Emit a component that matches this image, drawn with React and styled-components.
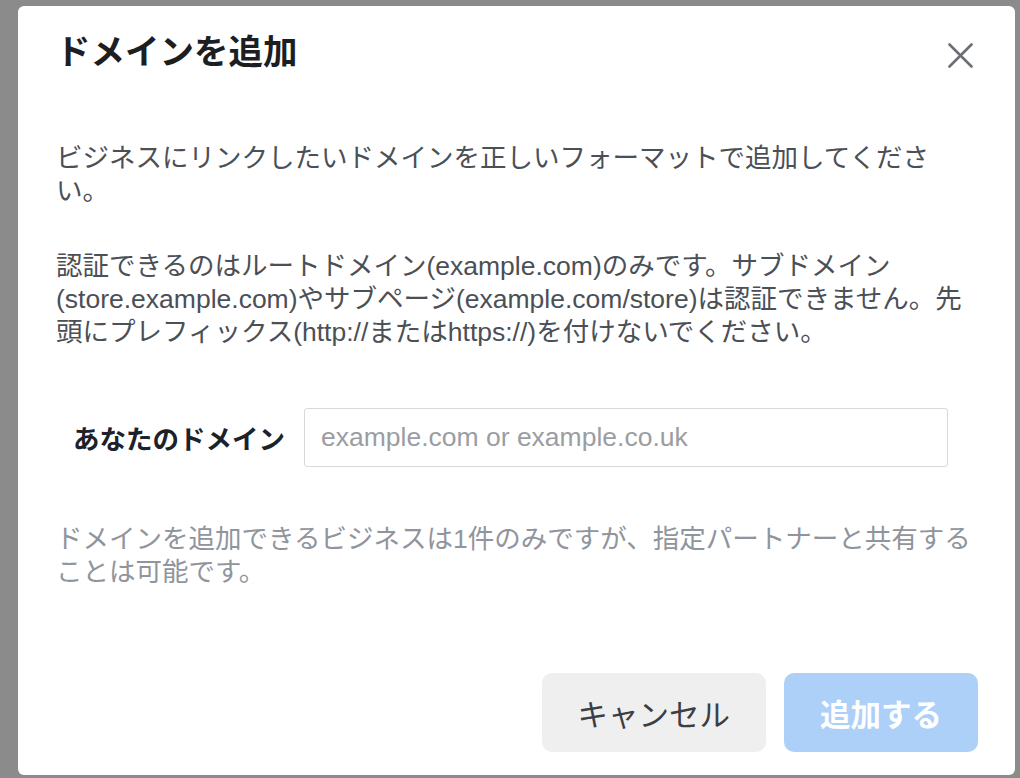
import React from 'react';
import styled, { createGlobalStyle } from 'styled-components';

const GlobalStyle = createGlobalStyle`
  html, body {
    margin: 0;
    padding: 0;
    background: #8b8b8b;
  }
  * {
    box-sizing: border-box;
  }
`;

const FONT = `"Liberation Sans", Arial, "Noto Sans CJK JP", sans-serif`;

const Backdrop = styled.div`
  width: 1020px;
  height: 778px;
  padding: 6px 5px 3px 18px;
  background: #8b8b8b;
  overflow: hidden;
  font-family: ${FONT};
`;

const Dialog = styled.div`
  height: 100%;
  background: #fff;
  border-radius: 6px;
  padding: 26px 37px 23px 38px;
  display: flex;
  flex-direction: column;
`;

const Header = styled.div`
  display: flex;
  align-items: center;
  justify-content: space-between;
  height: 40px;
  padding-right: 5px;
`;

const Title = styled.h1`
  margin: 0;
  font-size: 34.5px;
  line-height: 40px;
  font-weight: 700;
  color: #1c1e21;
`;

const CloseButton = styled.button`
  border: 0;
  background: none;
  padding: 0;
  width: 25px;
  height: 25px;
  margin-top: 6px;
  cursor: pointer;
  display: flex;
`;

const Body = styled.div`
  display: flex;
  flex-direction: column;
  flex: 1;
  padding-top: 70px;
`;

const Paragraph = styled.p`
  margin: 0 0 ${(p) => p.$gap || 0}px;
  font-size: 26.5px;
  line-height: 33px;
  color: ${(p) => (p.$muted ? '#90949c' : '#4b4f56')};
  white-space: nowrap;
`;

const FieldRow = styled.div`
  display: flex;
  align-items: center;
  gap: 19px;
  padding: 0 30px 0 17px;
  margin: 59px 0 56px;
`;

const Label = styled.label`
  font-size: 26.5px;
  font-weight: 700;
  color: #1d2129;
  white-space: nowrap;
`;

const Input = styled.input`
  flex: 1;
  height: 59px;
  border: 1px solid #d6d9dd;
  border-radius: 3px;
  padding: 0 16px;
  font-family: ${FONT};
  font-size: 26.5px;
  color: #1d2129;
  outline: none;

  &::placeholder {
    color: #9a9da2;
  }
`;

const Footer = styled.div`
  margin-top: auto;
  display: flex;
  justify-content: flex-end;
  gap: 18px;
`;

const Button = styled.button`
  height: 79px;
  padding: 0 36px;
  border: 0;
  border-radius: 10px;
  font-family: ${FONT};
  font-size: 30.5px;
  font-weight: ${(p) => (p.$primary ? 700 : 400)};
  background: ${(p) => (p.$primary ? '#add0f8' : '#efefef')};
  color: ${(p) => (p.$primary ? '#ffffff' : '#3b3e44')};
  cursor: ${(p) => (p.$primary ? 'default' : 'pointer')};
`;

const CloseIcon = () => (
  <svg width="25" height="25" viewBox="0 0 25 25">
    <path
      d="M1.5 1.5 L23.5 23.5 M23.5 1.5 L1.5 23.5"
      stroke="#6b6e73"
      strokeWidth="2.6"
      strokeLinecap="round"
      fill="none"
    />
  </svg>
);

export default function App() {
  return (
    <>
      <GlobalStyle />
      <Backdrop>
        <Dialog>
          <Header>
            <Title>ドメインを追加</Title>
            <CloseButton aria-label="閉じる">
              <CloseIcon />
            </CloseButton>
          </Header>
          <Body>
            <Paragraph $gap={42}>
              ビジネスにリンクしたいドメインを正しいフォーマットで追加してくださ
              <br />
              い。
            </Paragraph>
            <Paragraph>
              認証できるのはルートドメイン(example.com)のみです。サブドメイン
              <br />
              (store.example.com)やサブページ(example.com/store)は認証できません。先
              <br />
              頭にプレフィックス(http://またはhttps://)を付けないでください。
            </Paragraph>
            <FieldRow>
              <Label htmlFor="domain">あなたのドメイン</Label>
              <Input id="domain" placeholder="example.com or example.co.uk" />
            </FieldRow>
            <Paragraph $muted>
              ドメインを追加できるビジネスは1件のみですが、指定パートナーと共有する
              <br />
              ことは可能です。
            </Paragraph>
            <Footer>
              <Button>キャンセル</Button>
              <Button $primary disabled>
                追加する
              </Button>
            </Footer>
          </Body>
        </Dialog>
      </Backdrop>
    </>
  );
}
